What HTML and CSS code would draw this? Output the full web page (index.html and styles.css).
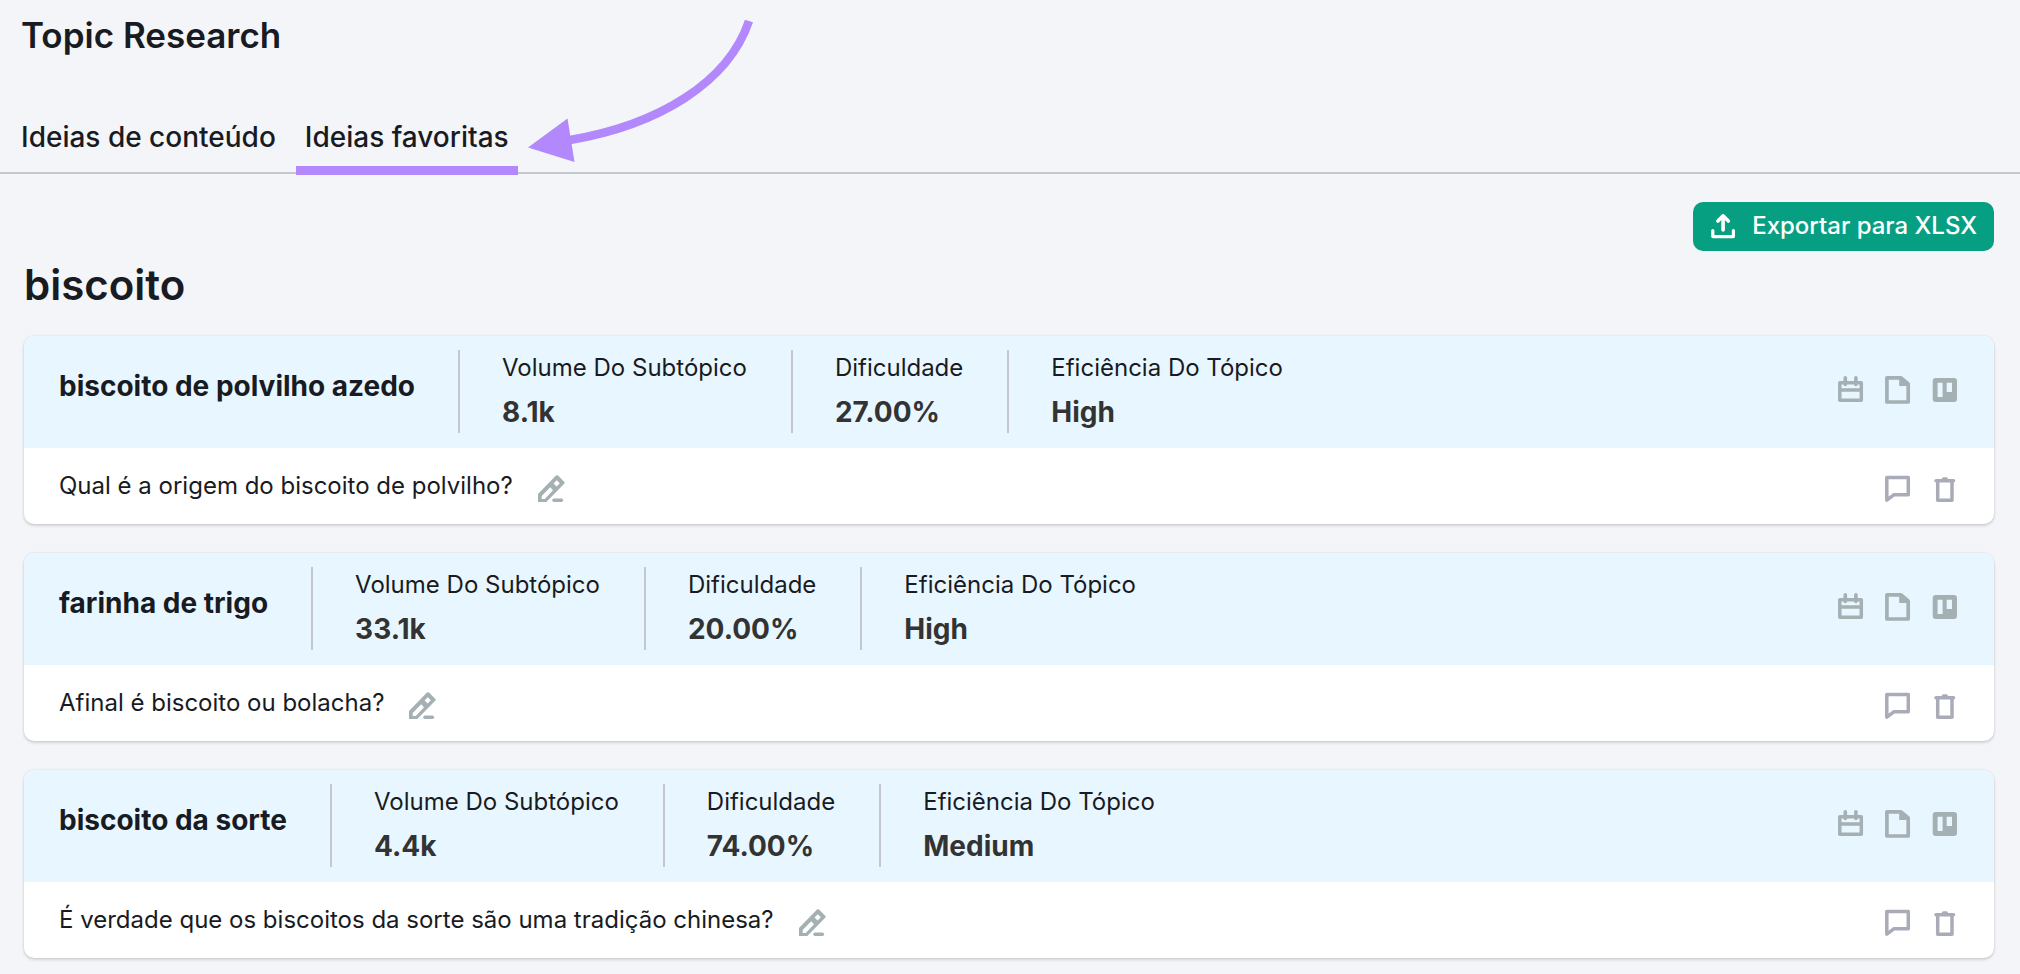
FILE: index.html
```
<!DOCTYPE html>
<html lang="pt-BR">
<head>
<meta charset="utf-8">
<meta name="viewport" content="width=device-width, initial-scale=1">
<title>Topic Research</title>
<link rel="stylesheet" href="styles.css">
</head>
<body>
<svg class="sprite" aria-hidden="true">
  <symbol id="i-calendar" viewBox="0 -2 28 36">
    <path d="M2.8 6.8H24.3V24.3H2.8ZM2.8 14H24.3" fill="none" stroke="currentColor" stroke-width="3.5" stroke-linejoin="round"/>
    <path d="M8.3 1.8V8.4M18.9 1.8V8.4" fill="none" stroke="currentColor" stroke-width="3.6" stroke-linecap="round"/>
  </symbol>
  <symbol id="i-doc" viewBox="0 -2 28 36">
    <path d="M2.9 1.8H17L24.2 8V26H2.9Z" fill="none" stroke="currentColor" stroke-width="3.7" stroke-linejoin="round"/>
    <path d="M15.2 1.5H17.5L25 8.5V10H15.2Z" fill="currentColor"/>
  </symbol>
  <symbol id="i-board" viewBox="0 -2 28 36">
    <path fill="currentColor" fill-rule="evenodd" d="M4.7 2H23a3 3 0 0 1 3 3V23a3 3 0 0 1-3 3H4.7a3 3 0 0 1-3-3V5a3 3 0 0 1 3-3ZM6.6 6.7V21H11.6V6.7ZM15.7 6.7V16H21V6.7Z"/>
  </symbol>
  <symbol id="i-comment" viewBox="0 -2 28 36">
    <path d="M2.8 7.5H24.3V24.8H9.8L2.8 30.2Z" fill="none" stroke="currentColor" stroke-width="3.5" stroke-linejoin="round"/>
  </symbol>
  <symbol id="i-trash" viewBox="0 -2 28 36">
    <path d="M6.7 11V30.2H21V11" fill="none" stroke="currentColor" stroke-width="3.5" stroke-linejoin="round"/>
    <path d="M5 10.8H22.5" stroke="currentColor" stroke-width="3.5" stroke-linecap="round"/>
    <path d="M10.7 10V9a1.8 1.8 0 0 1 1.8-1.8H15.2A1.8 1.8 0 0 1 17 9V10Z" fill="currentColor"/>
  </symbol>
  <symbol id="i-edit" viewBox="0 -2 28 36">
    <path fill="currentColor" fill-rule="evenodd" d="M1 32V24L19 5.6Q20 4.7 21 5.6L27.2 11.8Q28.2 12.8 27.2 13.8L9.3 32ZM4.7 29H7.8L16 20.2L13.2 17.2L4.7 26ZM19.8 10.2L16.6 13.5L19.6 16.5L22.8 13.2Z"/>
    <path d="M17 30.2H24.4" stroke="currentColor" stroke-width="3.4" stroke-linecap="round"/>
  </symbol>
</svg>

<header class="page-header">
  <h1 class="page-title">Topic Research</h1>
  <nav class="tabs">
    <a class="tab" href="#ideias">Ideias de conteúdo</a>
    <a class="tab tab-active" href="#favoritas" aria-current="page">Ideias favoritas</a>
  </nav>
  <svg class="callout" viewBox="0 0 232 148" aria-hidden="true">
    <path d="M42 127C130 112 200 70 221 8" fill="none" stroke="#b388fd" stroke-width="8.5"/>
    <path d="M0 134.5L39.5 105.5L46.5 149Z" fill="#b388fd"/>
  </svg>
</header>

<main class="content">
  <div class="toolbar">
    <button class="export" type="button">
      <svg class="export-icon" viewBox="0 0 24 26" aria-hidden="true">
        <path d="M1.8 17.5V23.6H22.4V17.5" fill="none" stroke="currentColor" stroke-width="3.2" stroke-linecap="round" stroke-linejoin="round"/>
        <path d="M12.1 17V3.5M6.9 8L12.1 2.8L17.3 8" fill="none" stroke="currentColor" stroke-width="3.6" stroke-linecap="round" stroke-linejoin="round"/>
      </svg>
      Exportar para XLSX
    </button>
  </div>
  <h2 class="topic">biscoito</h2>

  <div class="cards">
    <article class="card">
      <div class="card-head">
        <h3 class="card-title">biscoito de polvilho azedo</h3>
        <dl class="stats">
          <div class="stat"><dt>Volume Do Subtópico</dt><dd>8.1k</dd></div>
          <div class="stat"><dt>Dificuldade</dt><dd>27.00%</dd></div>
          <div class="stat"><dt>Eficiência Do Tópico</dt><dd>High</dd></div>
        </dl>
        <div class="actions">
          <button class="icon-btn" type="button" aria-label="Calendário"><svg class="icon"><use href="#i-calendar"/></svg></button>
          <button class="icon-btn" type="button" aria-label="Documento"><svg class="icon"><use href="#i-doc"/></svg></button>
          <button class="icon-btn" type="button" aria-label="Trello"><svg class="icon"><use href="#i-board"/></svg></button>
        </div>
      </div>
      <div class="card-row">
        <p class="question">Qual é a origem do biscoito de polvilho?</p>
        <button class="icon-btn" type="button" aria-label="Editar"><svg class="icon"><use href="#i-edit"/></svg></button>
        <div class="actions actions-row">
          <button class="icon-btn" type="button" aria-label="Comentar"><svg class="icon"><use href="#i-comment"/></svg></button>
          <button class="icon-btn" type="button" aria-label="Excluir"><svg class="icon"><use href="#i-trash"/></svg></button>
        </div>
      </div>
    </article>

    <article class="card">
      <div class="card-head">
        <h3 class="card-title">farinha de trigo</h3>
        <dl class="stats">
          <div class="stat"><dt>Volume Do Subtópico</dt><dd>33.1k</dd></div>
          <div class="stat"><dt>Dificuldade</dt><dd>20.00%</dd></div>
          <div class="stat"><dt>Eficiência Do Tópico</dt><dd>High</dd></div>
        </dl>
        <div class="actions">
          <button class="icon-btn" type="button" aria-label="Calendário"><svg class="icon"><use href="#i-calendar"/></svg></button>
          <button class="icon-btn" type="button" aria-label="Documento"><svg class="icon"><use href="#i-doc"/></svg></button>
          <button class="icon-btn" type="button" aria-label="Trello"><svg class="icon"><use href="#i-board"/></svg></button>
        </div>
      </div>
      <div class="card-row">
        <p class="question">Afinal é biscoito ou bolacha?</p>
        <button class="icon-btn" type="button" aria-label="Editar"><svg class="icon"><use href="#i-edit"/></svg></button>
        <div class="actions actions-row">
          <button class="icon-btn" type="button" aria-label="Comentar"><svg class="icon"><use href="#i-comment"/></svg></button>
          <button class="icon-btn" type="button" aria-label="Excluir"><svg class="icon"><use href="#i-trash"/></svg></button>
        </div>
      </div>
    </article>

    <article class="card">
      <div class="card-head">
        <h3 class="card-title">biscoito da sorte</h3>
        <dl class="stats">
          <div class="stat"><dt>Volume Do Subtópico</dt><dd>4.4k</dd></div>
          <div class="stat"><dt>Dificuldade</dt><dd>74.00%</dd></div>
          <div class="stat"><dt>Eficiência Do Tópico</dt><dd>Medium</dd></div>
        </dl>
        <div class="actions">
          <button class="icon-btn" type="button" aria-label="Calendário"><svg class="icon"><use href="#i-calendar"/></svg></button>
          <button class="icon-btn" type="button" aria-label="Documento"><svg class="icon"><use href="#i-doc"/></svg></button>
          <button class="icon-btn" type="button" aria-label="Trello"><svg class="icon"><use href="#i-board"/></svg></button>
        </div>
      </div>
      <div class="card-row">
        <p class="question">É verdade que os biscoitos da sorte são uma tradição chinesa?</p>
        <button class="icon-btn" type="button" aria-label="Editar"><svg class="icon"><use href="#i-edit"/></svg></button>
        <div class="actions actions-row">
          <button class="icon-btn" type="button" aria-label="Comentar"><svg class="icon"><use href="#i-comment"/></svg></button>
          <button class="icon-btn" type="button" aria-label="Excluir"><svg class="icon"><use href="#i-trash"/></svg></button>
        </div>
      </div>
    </article>
  </div>
</main>
</body>
</html>
```
FILE: styles.css
```
* {
  box-sizing: border-box;
}

body {
  margin: 0;
  background: #f4f5f9;
  color: #191b23;
  font-family: Inter, "Liberation Sans", sans-serif;
}

h1, h2, h3, p, dl, dd {
  margin: 0;
}

button {
  border: 0;
  padding: 0;
  font: inherit;
  cursor: pointer;
}

.sprite {
  display: none;
}

.page-header {
  position: relative;
  padding-top: 15px;
}

.page-title {
  padding-left: 21px;
  font-size: 35px;
  font-weight: 600;
  line-height: 40px;
}

.tabs {
  display: flex;
  gap: 11px;
  margin-top: 62px;
  padding-left: 12px;
  border-bottom: 2px solid #c4c7cf;
}

.tab {
  position: relative;
  padding: 0 9px 15px;
  color: inherit;
  font-size: 28px;
  font-weight: 500;
  line-height: 40px;
  text-decoration: none;
}

.tab-active::after {
  content: "";
  position: absolute;
  left: 0;
  right: 0;
  bottom: -3px;
  height: 9px;
  background: #b388fd;
}

.callout {
  position: absolute;
  left: 528px;
  top: 13px;
  width: 232px;
  height: 148px;
  overflow: visible;
}

.content {
  padding: 28px 26px 16px 24px;
}

.toolbar {
  display: flex;
  justify-content: flex-end;
}

.export {
  display: flex;
  align-items: center;
  gap: 17px;
  padding: 6px 17px 7px 18px;
  border-radius: 10px;
  background: #079f82;
  color: #fff;
  font-size: 24px;
  font-weight: 500;
  line-height: 36px;
}

.export-icon {
  width: 24px;
  height: 26px;
}

.topic {
  margin-top: 10px;
  font-size: 42px;
  font-weight: 600;
  line-height: 48px;
}

.cards {
  display: flex;
  flex-direction: column;
  gap: 29px;
  margin-top: 27px;
}

.card {
  overflow: hidden;
  border-radius: 10px;
  background: #fff;
  box-shadow: 0 0 2px rgba(25, 27, 35, 0.16), 0 2px 3px rgba(25, 27, 35, 0.14);
}

.card-head {
  display: flex;
  align-items: center;
  padding: 14px 35px 15px;
  background: #e8f7ff;
}

.card-title {
  padding: 0 43px 12px 0;
  font-size: 28px;
  font-weight: 700;
  line-height: 40px;
}

.stats {
  display: flex;
}

.stat {
  padding: 0 44px 0 42px;
  border-left: 2px solid #c3c8d0;
}

.stat dt {
  font-size: 24px;
  line-height: 36px;
}

.stat dd {
  margin-top: 6px;
  padding-bottom: 1px;
  color: #333;
  font-size: 28px;
  font-weight: 700;
  line-height: 40px;
}

.actions {
  display: flex;
  gap: 19px;
  margin-left: auto;
}

.icon-btn {
  display: flex;
  background: none;
  color: #a5b0b3;
}

.actions-row .icon-btn {
  color: #a9abb8;
}

.icon {
  width: 28px;
  height: 36px;
}

.card-row {
  display: flex;
  align-items: center;
  gap: 24px;
  padding: 20px 35px;
}

.question {
  font-size: 24px;
  line-height: 36px;
}
```
